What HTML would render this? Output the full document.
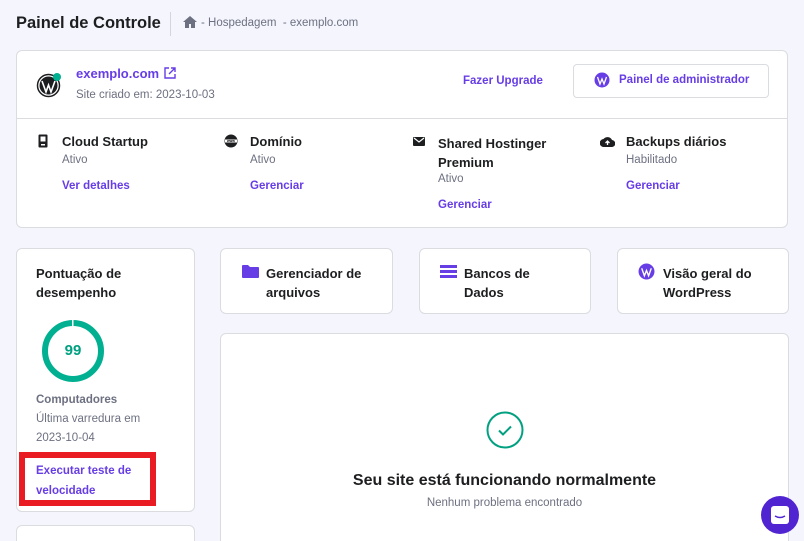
<!DOCTYPE html>
<html style="width:804px;height:541px;overflow:hidden"><head><meta charset="utf-8"><style>
*{margin:0;padding:0;box-sizing:border-box}
body{width:804px;height:541px;background:#f4f5fd;font-family:"Liberation Sans",sans-serif;color:#1d1e20;position:relative;overflow:hidden}
.a{position:absolute}
.card{position:absolute;background:#fff;border:1px solid #dadce0;border-radius:6px}
.b{font-weight:bold}
.t{font-size:13px;font-weight:bold;color:#1d1e20}
.s{font-size:11.5px;color:#6d7081}
.l{font-size:11.5px;font-weight:bold;color:#673de6}
</style></head><body>
<div class="a b" style="left:16px;top:14px;font-size:16.5px">Painel de Controle</div>
<div class="a" style="left:170px;top:12px;width:1px;height:24px;background:#d5d6dc"></div>
<svg class="a" style="left:183px;top:16px" width="14" height="12" viewBox="0 0 14 12"><path d="M7 0L0 6h2v6h4V8h2v4h4V6h2z" fill="#6d7081"/></svg>
<div class="a s" style="left:201px;top:17px;font-size:11.5px">- Hospedagem &nbsp;- exemplo.com</div>

<div class="card" style="left:16px;top:50px;width:772px;height:178px">
  <div class="a" style="left:0;top:67px;width:770px;height:1px;background:#dadce0"></div>
</div>
<svg class="a" style="left:36px;top:72px" width="26" height="26" viewBox="0 0 26 26"><circle cx="12.5" cy="13.5" r="11" fill="#fff" stroke="#1d1e20" stroke-width="1.5"/><circle cx="12.5" cy="13.5" r="9" fill="#1d1e20"/><path d="M6 9l4 11 2.5-7 2.5 7 4-11" stroke="#fff" stroke-width="1.6" fill="none"/><circle cx="21" cy="5" r="4" fill="#00b090"/></svg>
<div class="a b" style="left:76px;top:66px;font-size:13px;color:#673de6">exemplo.com</div>
<svg class="a" style="left:164px;top:67px" width="12" height="12" viewBox="0 0 12 12"><path d="M5 1H1v10h10V7M7 1h4v4M11 1L5 7" stroke="#673de6" stroke-width="1.4" fill="none"/></svg>
<div class="a s" style="left:76px;top:89px">Site criado em: 2023-10-03</div>
<div class="a l" style="left:463px;top:75px">Fazer Upgrade</div>
<div class="a" style="left:573px;top:64px;width:196px;height:34px;border:1px solid #dadce0;border-radius:4px;background:#fff"></div>
<svg class="a" style="left:594px;top:72px" width="16" height="16" viewBox="0 0 16 16"><circle cx="8" cy="8" r="7.5" fill="#673de6"/><path d="M3.5 5l2.5 7 2-5 2 5 2.5-7" stroke="#fff" stroke-width="1.3" fill="none"/></svg>
<div class="a l" style="left:619px;top:74px">Painel de administrador</div>

<svg class="a" style="left:38px;top:134px" width="10" height="14" viewBox="0 0 10 14"><rect x="0.5" y="0.5" width="9" height="13" rx="1" fill="#1d1e20"/><rect x="2.5" y="2.5" width="5" height="5" fill="#fff"/><rect x="3" y="10" width="4" height="1.5" fill="#fff"/></svg>
<div class="a t" style="left:62px;top:134px">Cloud Startup</div>
<div class="a s" style="left:62px;top:154px">Ativo</div>
<div class="a l" style="left:62px;top:180px">Ver detalhes</div>
<svg class="a" style="left:224px;top:134px" width="14" height="14" viewBox="0 0 14 14"><circle cx="7" cy="7" r="6.5" fill="#1d1e20"/><rect x="1" y="5.5" width="12" height="3" fill="#fff"/><text x="7" y="8.2" font-size="3.4" text-anchor="middle" font-family="Liberation Sans" font-weight="bold">www</text></svg>
<div class="a t" style="left:250px;top:134px">Domínio</div>
<div class="a s" style="left:250px;top:154px">Ativo</div>
<div class="a l" style="left:250px;top:180px">Gerenciar</div>
<svg class="a" style="left:413px;top:137px" width="12" height="9" viewBox="0 0 12 9"><rect width="12" height="9" rx="1" fill="#1d1e20"/><path d="M1 1l5 4 5-4" stroke="#fff" stroke-width="1.2" fill="none"/></svg>
<div class="a t" style="left:438px;top:134px;line-height:19px">Shared Hostinger<br>Premium</div>
<div class="a s" style="left:438px;top:173px">Ativo</div>
<div class="a l" style="left:438px;top:199px">Gerenciar</div>
<svg class="a" style="left:600px;top:136px" width="15" height="11" viewBox="0 0 15 11"><path d="M4 11a4 4 0 0 1-.5-8A5 5 0 0 1 12 4a3.5 3.5 0 0 1-.5 7z" fill="#1d1e20"/><path d="M7.5 9V5M5.5 7l2-2 2 2" stroke="#fff" stroke-width="1.3" fill="none"/></svg>
<div class="a t" style="left:626px;top:134px">Backups diários</div>
<div class="a s" style="left:626px;top:154px">Habilitado</div>
<div class="a l" style="left:626px;top:180px">Gerenciar</div>

<div class="card" style="left:16px;top:248px;width:179px;height:264px"></div>
<div class="card" style="left:16px;top:525px;width:179px;height:30px"></div>
<div class="a t" style="left:36px;top:264px;line-height:19px">Pontuação de<br>desempenho</div>
<svg class="a" style="left:40px;top:318px" width="66" height="66" viewBox="0 0 66 66"><circle cx="33" cy="33" r="28" fill="none" stroke="#00b090" stroke-width="6"/><rect x="32" y="1" width="1.5" height="8" fill="#fff"/></svg>
<div class="a b" style="left:40px;top:342px;width:66px;text-align:center;font-size:15px;color:#00a080">99</div>
<div class="a b" style="left:36px;top:394px;font-size:11.5px;color:#6d7081">Computadores</div>
<div class="a s" style="left:36px;top:413px">Última varredura em</div>
<div class="a s" style="left:36px;top:432px">2023-10-04</div>
<div class="a" style="left:19px;top:452px;width:137px;height:54px;border:6px solid #e91c24"></div>
<div class="a l" style="left:36px;top:461px;line-height:20px">Executar teste de<br>velocidade</div>

<div class="card" style="left:220px;top:248px;width:173px;height:66px"></div>
<div class="card" style="left:419px;top:248px;width:172px;height:66px"></div>
<div class="card" style="left:617px;top:248px;width:172px;height:66px"></div>
<svg class="a" style="left:242px;top:265px" width="17" height="13" viewBox="0 0 17 13"><path d="M0 1a1 1 0 0 1 1-1h5l2 2h8a1 1 0 0 1 1 1v9a1 1 0 0 1-1 1H1a1 1 0 0 1-1-1z" fill="#673de6"/></svg>
<div class="a t" style="left:266px;top:264px;line-height:19px">Gerenciador de<br>arquivos</div>
<svg class="a" style="left:440px;top:265px" width="17" height="13" viewBox="0 0 17 13"><rect y="0" width="17" height="3" fill="#673de6"/><rect y="5" width="17" height="3" fill="#673de6"/><rect y="10" width="17" height="3" fill="#673de6"/></svg>
<div class="a t" style="left:464px;top:264px;line-height:19px">Bancos de<br>Dados</div>
<svg class="a" style="left:638px;top:263px" width="17" height="17" viewBox="0 0 16 16"><circle cx="8" cy="8" r="7.5" fill="#673de6"/><path d="M3.5 5l2.5 7 2-5 2 5 2.5-7" stroke="#fff" stroke-width="1.3" fill="none"/></svg>
<div class="a t" style="left:663px;top:264px;line-height:19px">Visão geral do<br>WordPress</div>

<div class="card" style="left:220px;top:333px;width:569px;height:220px"></div>
<svg class="a" style="left:486px;top:411px" width="38" height="38" viewBox="0 0 38 38"><circle cx="19" cy="19" r="17.5" fill="none" stroke="#00a080" stroke-width="2"/><path d="M13 19.5l4 4 8-8" stroke="#00a080" stroke-width="2" fill="none"/></svg>
<div class="a b" style="left:220px;top:472px;width:569px;text-align:center;font-size:16px">Seu site está funcionando normalmente</div>
<div class="a s" style="left:220px;top:497px;width:569px;text-align:center">Nenhum problema encontrado</div>
<div class="a" style="left:761px;top:496px;width:38px;height:38px;border-radius:50%;background:#5025d1"></div>
<svg class="a" style="left:770px;top:505px" width="20" height="20" viewBox="0 0 20 20"><rect x="1" y="1" width="18" height="18" rx="3" fill="#fff"/><path d="M5 11q5 3 10 0" stroke="#5025d1" stroke-width="1.5" fill="none"/></svg>
</body></html>
